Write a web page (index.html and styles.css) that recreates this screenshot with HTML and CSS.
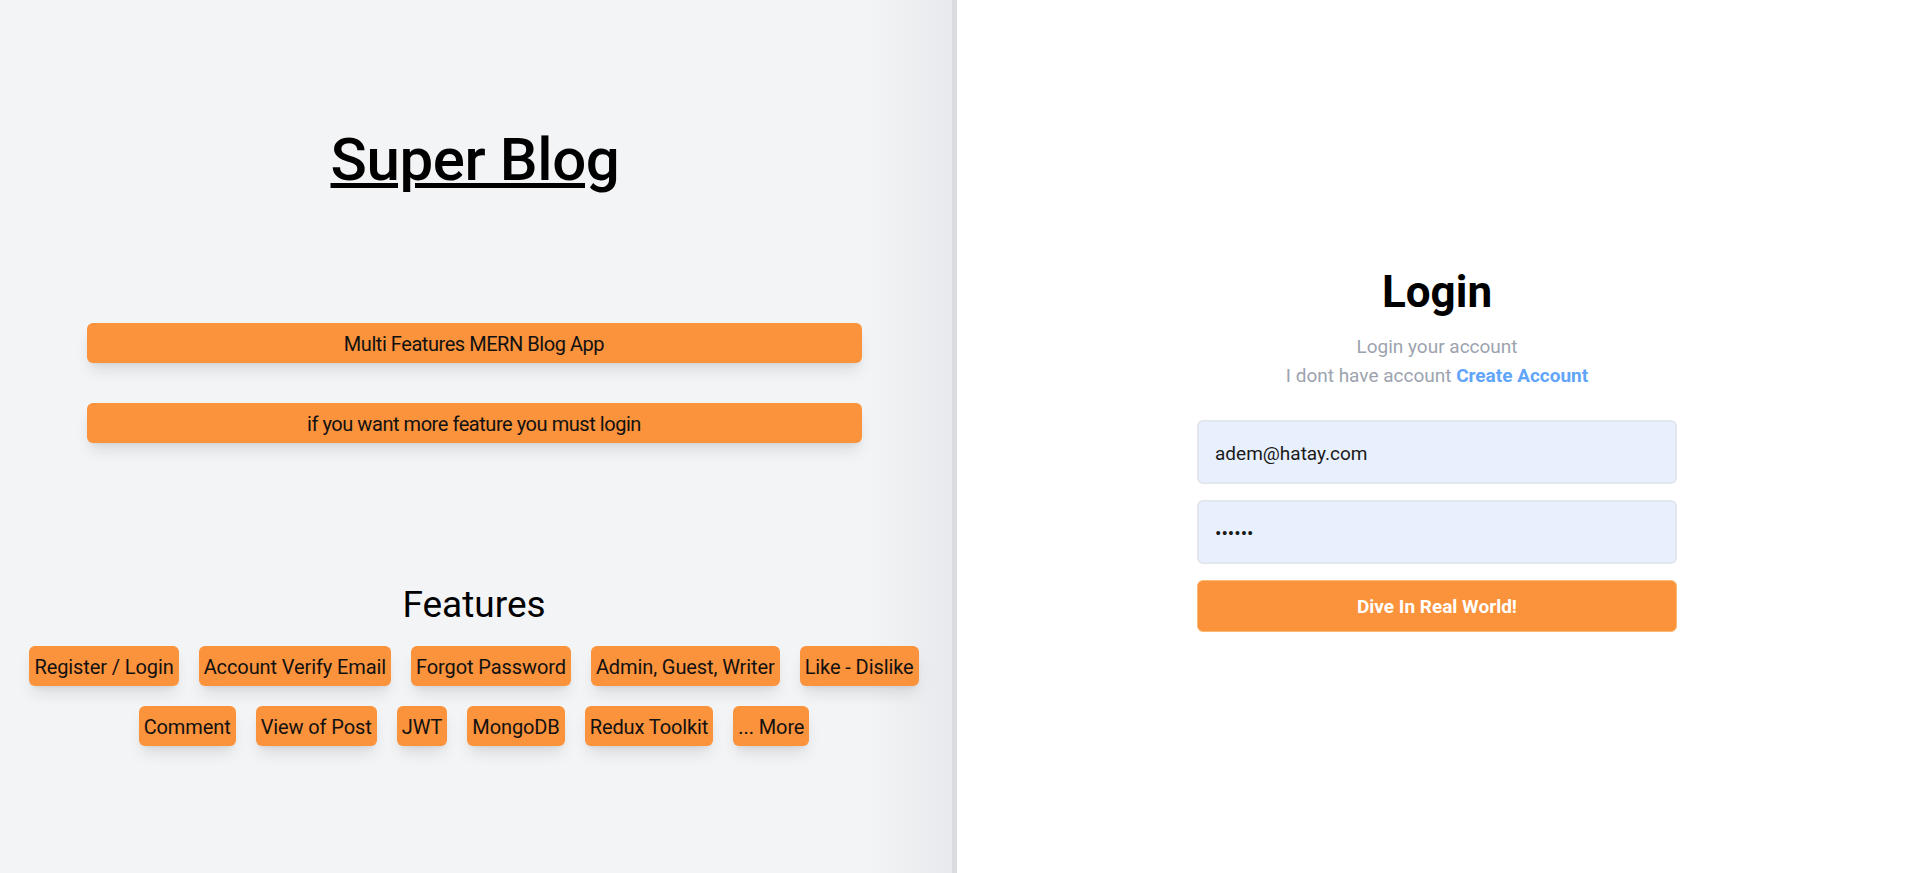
FILE: index.html
```html
<!DOCTYPE html>
<html lang="en">
<head>
<meta charset="utf-8">
<title>Super Blog - Login</title>
<link rel="stylesheet" href="styles.css">
</head>
<body>
<div class="page">
  <section class="intro">
    <h1 class="brand">Super Blog</h1>
    <div class="notes">
      <div class="note">Multi Features MERN Blog App</div>
      <div class="note">if you want more feature you must login</div>
    </div>
    <h2 class="features-title">Features</h2>
    <div class="tags">
      <span class="tag">Register / Login</span>
      <span class="tag">Account Verify Email</span>
      <span class="tag">Forgot Password</span>
      <span class="tag">Admin, Guest, Writer</span>
      <span class="tag">Like - Dislike</span>
      <span class="tag">Comment</span>
      <span class="tag">View of Post</span>
      <span class="tag">JWT</span>
      <span class="tag">MongoDB</span>
      <span class="tag">Redux Toolkit</span>
      <span class="tag">... More</span>
    </div>
  </section>
  <section class="auth">
    <h2 class="auth-title">Login</h2>
    <p class="auth-sub">Login your account</p>
    <p class="auth-sub">I dont have account <a class="auth-link" href="#">Create Account</a></p>
    <form class="auth-form">
      <input class="field" type="email" value="adem@hatay.com">
      <input class="field" type="password" value="123456">
      <button class="submit" type="button">Dive In Real World!</button>
    </form>
  </section>
</div>
</body>
</html>
```

FILE: styles.css
```css
* { box-sizing: border-box; }

html, body {
  margin: 0;
  padding: 0;
  height: 100%;
}

body {
  font-family: Roboto, "Liberation Sans", Arial, sans-serif;
  color: #111;
  background: #fff;
}

.page {
  display: flex;
  height: 873px;
  overflow: hidden;
}

.intro {
  width: 957px;
  flex: none;
  padding: 124px 9px 0 0;
  background: linear-gradient(to right,
    #f3f4f6 0,
    #f3f4f6 calc(100% - 90px),
    #e8e9ec calc(100% - 5px),
    #dadbde calc(100% - 5px),
    #dadbde 100%);
  display: flex;
  flex-direction: column;
  align-items: center;
}

.brand {
  margin: 0;
  font-size: 60px;
  line-height: 72px;
  font-weight: 500;
  color: #000;
  text-decoration: underline;
  text-decoration-thickness: 5px;
  text-underline-offset: 3px;
  letter-spacing: -0.4px;
  padding-left: 2px;
}

.notes {
  margin-top: 127px;
  display: flex;
  flex-direction: column;
  gap: 40px;
}

.note {
  width: 775px;
  height: 40px;
  padding-top: 2px;
  display: flex;
  align-items: center;
  justify-content: center;
  background: #fb923c;
  border-radius: 6px;
  font-size: 20px;
  letter-spacing: -0.45px;
  color: #111;
  box-shadow: 0 10px 15px -3px rgba(0,0,0,0.1), 0 4px 6px -4px rgba(0,0,0,0.1);
}

.features-title {
  margin: 142px 0 0;
  font-size: 37px;
  line-height: 40px;
  font-weight: 400;
  color: #000;
}

.tags {
  margin-top: 21px;
  width: 100%;
  padding: 0 12px;
  display: flex;
  flex-wrap: wrap;
  justify-content: center;
  gap: 20px;
}

.tag {
  height: 40px;
  padding: 2px 5px 0;
  display: flex;
  align-items: center;
  background: #fb923c;
  border-radius: 6px;
  font-size: 20px;
  letter-spacing: -0.1px;
  color: #111;
  box-shadow: 0 10px 15px -3px rgba(0,0,0,0.1), 0 4px 6px -4px rgba(0,0,0,0.1);
}

.auth {
  flex: 1;
  background: #fff;
  padding-top: 266px;
  display: flex;
  flex-direction: column;
  align-items: center;
}

.auth-title {
  margin: 0 0 14px;
  font-size: 44px;
  line-height: 52px;
  font-weight: 700;
  color: #000;
}

.auth-sub {
  margin: 0;
  font-size: 19px;
  line-height: 29px;
  color: #9ca3af;
}

.auth-link {
  color: #60a5fa;
  font-weight: 700;
  text-decoration: none;
}

.auth-form {
  margin-top: 30px;
  width: 480px;
  display: flex;
  flex-direction: column;
  gap: 16px;
}

.field {
  width: 100%;
  height: 64px;
  padding: 3px 16px 0;
  border: 2px solid #e3e6ec;
  border-radius: 6px;
  background: #e8f0fe;
  font-family: Roboto, "Liberation Sans", Arial, sans-serif;
  font-size: 19px;
  color: #1a1a1a;
  outline: none;
}

.submit {
  height: 52px;
  padding-top: 2px;
  border: 1px solid #fdba74;
  border-radius: 6px;
  background: #fb923c;
  color: #fff;
  font-family: Roboto, "Liberation Sans", Arial, sans-serif;
  font-size: 19px;
  font-weight: 700;
  cursor: pointer;
}
```
